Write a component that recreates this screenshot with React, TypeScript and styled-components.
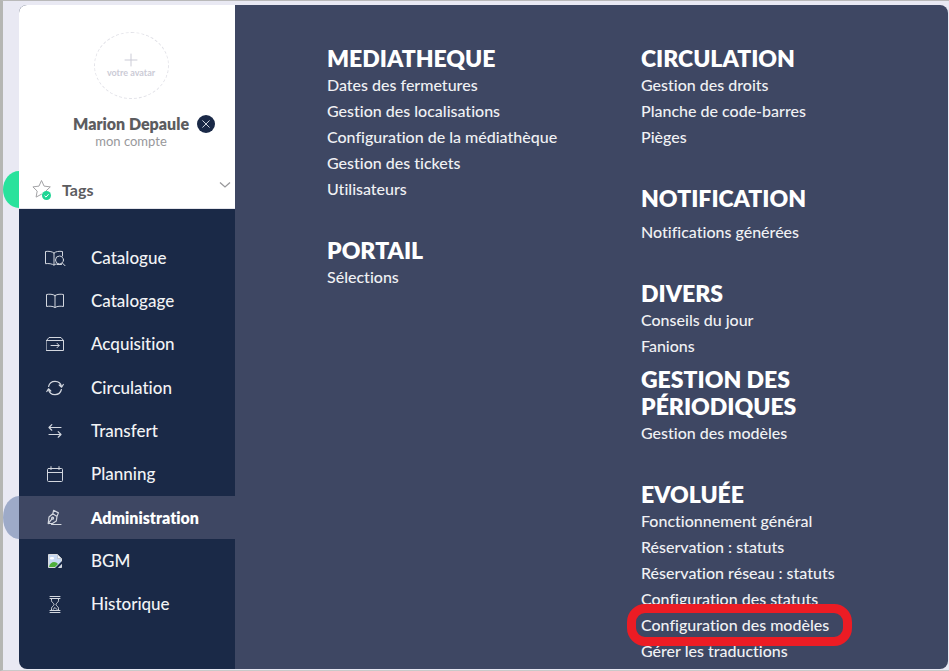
import React from "react";
import styled, { createGlobalStyle, css } from "styled-components";

const GlobalStyle = createGlobalStyle`
  *, *::before, *::after { box-sizing: border-box; }
  body {
    margin: 0;
    background: #e9e9f3;
    font-family: "Lato", "Open Sans", sans-serif;
    font-variant-ligatures: none;
  }
  ul { list-style: none; margin: 0; padding: 0; }
  h2 { margin: 0; }
`;

const Page = styled.div`
  min-height: 100vh;
  display: flex;
  padding: 4px 1px 1px 16px;
  border-top: 1px solid #b9b9b9;
  border-bottom: 1px solid #c9c9c9;
  border-left: 3px solid #b5b6b3;
`;

const Shell = styled.div`
  flex: 1;
  display: flex;
`;

const Sidebar = styled.aside`
  flex: 0 0 216px;
  display: flex;
  flex-direction: column;
  background: #1a2947;
  border-radius: 8px 0 0 8px;
`;

const Profile = styled.section`
  display: flex;
  flex-direction: column;
  align-items: center;
  padding: 27px 0 23px 8px;
  background: #fff;
  border-radius: 8px 0 0 0;
`;

const AvatarButton = styled.button`
  width: 75px;
  height: 67px;
  display: flex;
  flex-direction: column;
  align-items: center;
  justify-content: center;
  padding: 0;
  border: 1px dashed #e2e2e8;
  border-radius: 50%;
  background: none;
  color: #cbcbd6;
  font: 700 9px/12px "Lato", sans-serif;
`;

const NameRow = styled.div`
  align-self: stretch;
  display: grid;
  grid-template-columns: 1fr auto 1fr;
  align-items: center;
  column-gap: 8px;
  margin-top: 15px;
`;

const UserName = styled.strong`
  grid-column: 2;
  color: #5c5c5f;
  font-size: 16px;
  line-height: 20px;
  font-weight: 800;
`;

const LogoutButton = styled.button`
  width: 18px;
  height: 18px;
  padding: 0;
  display: grid;
  place-items: center;
  border: 0;
  border-radius: 50%;
  background: #1a2947;
  color: #cfd4de;
`;

const AccountLink = styled.a`
  color: #98989b;
  font-size: 13px;
  line-height: 14px;
  text-decoration: none;
`;

const tab = css<{ $color: string }>`
  &::before {
    content: "";
    position: absolute;
    top: 0;
    bottom: 0;
    left: -16px;
    width: 16px;
    border-radius: 16px 0 0 16px / 50% 0 0 50%;
    background: ${(p) => p.$color};
  }
`;

const TagsButton = styled.button<{ $color: string }>`
  position: relative;
  display: grid;
  grid-template-columns: 43px 1fr auto;
  align-items: center;
  height: 38px;
  padding: 0 4px 0 0;
  border: 0;
  border-bottom: 1px solid #e4e4ea;
  background: #fff;
  color: #5c5c5f;
  font: 700 16px/20px "Lato", sans-serif;
  text-align: left;
  ${tab}
`;

const TagsIcon = styled.span`
  display: grid;
  justify-content: end;
  padding-right: 10px;
`;

const Chevron = styled.svg`
  margin-bottom: 10px;
`;

const Nav = styled.nav`
  flex: 1;
  display: flex;
  padding: 27px 0 43px;
`;

const NavList = styled.ul`
  flex: 1;
  display: grid;
  grid-auto-rows: 1fr;
`;

const NavItem = styled.li`
  display: grid;
`;

const NavLink = styled.a<{ $active: boolean; $color: string }>`
  position: relative;
  display: grid;
  grid-template-columns: 72px 1fr;
  align-items: center;
  min-height: 40px;
  color: #f2f3f5;
  font-size: ${(p) => (p.$active ? 16 : 17)}px;
  line-height: 20px;
  font-weight: 500;
  text-decoration: none;
  ${(p) =>
    p.$active &&
    css`
      background: #3e4763;
      color: #fff;
      font-weight: 800;
    `}
  ${(p) => p.$active && tab}
`;

const IconCell = styled.span`
  display: grid;
  place-items: center;
  color: #d3d7df;
`;

const MegaMenu = styled.main`
  flex: 1;
  display: grid;
  grid-template-columns: 1fr 1fr;
  column-gap: 56px;
  align-content: start;
  padding: 40px 49px 4px 92px;
  background: #3e4763;
  border-radius: 0 8px 8px 0;
`;

const Group = styled.section<{ $tight?: boolean }>`
  margin-top: ${(p) => (p.$tight ? 7 : 35)}px;

  &:first-child {
    margin-top: 0;
  }
`;

const GroupTitle = styled.h2<{ $loose?: boolean }>`
  margin-bottom: ${(p) => (p.$loose ? 7 : 0)}px;
  color: #fff;
  font-size: 23px;
  line-height: 27px;
  font-weight: 800;
`;

const MenuItem = styled.li`
  height: 26px;
`;

const MenuLink = styled.a<{ $marked: boolean }>`
  position: relative;
  display: inline-block;
  color: #f0f1f4;
  font-size: 16px;
  line-height: 26px;
  font-weight: 500;
  text-decoration: none;
  white-space: nowrap;
  ${(p) =>
    p.$marked &&
    css`
      z-index: 1;
      &::after {
        content: "";
        position: absolute;
        inset: -8px -23px -8px -14px;
        border: 9px solid #ec1c24;
        border-radius: 18px;
      }
    `}
`;

const Line = styled.svg`
  display: block;
  fill: none;
  stroke: currentColor;
  stroke-linecap: round;
  stroke-linejoin: round;
`;

const icons: Record<string, React.ReactNode> = {
  catalogue: (
    <Line width="22" height="18" viewBox="0 0 22 18">
      <path d="M10 4.500v11M10 4C8 2.400 4.500 2 1.500 2.500v12.200c3-.4 6.400 0 8.500 1.300M10 4c1.800-1.600 5-2 8.500-1.500V7M10 16c.6-.5 1.300-.8 2-1" />
      <circle cx="15.500" cy="11" r="4" />
      <path d="M18.300 14l2.700 2.700M13 15.500h4.500" />
    </Line>
  ),
  catalogage: (
    <Line width="18" height="16" viewBox="0 0 18 16">
      <path d="M9 2.500v12M9 2.500C6.500 1 3.500 1 .5 1.500v12C3.500 13 6.500 13 9 14.500c2.500-1.500 5.500-1.500 8.500-1v-12C14.500 1 11.500 1 9 2.500z" />
    </Line>
  ),
  acquisition: (
    <Line width="18" height="16" viewBox="0 0 18 16">
      <path d="M.5 4.500h17v10H.5zM.5 4.500l2.500-3h12l2.500 3M5 9.500h8M11 7.300l2.200 2.200-2.200 2.200" />
    </Line>
  ),
  circulation: (
    <Line width="18" height="16" viewBox="0 0 18 16" strokeWidth="1.200">
      <path d="M2.600 6.500A6.600 6.600 0 0 1 15.500 6.700M15.400 9.500A6.600 6.600 0 0 1 2.500 9.300M13.200 5l2.400 2.200L17.300 4.500M.8 11.500l1.700-2.700L4.800 11" />
    </Line>
  ),
  transfert: (
    <Line width="16" height="16" viewBox="0 0 16 16" strokeWidth="1.200">
      <path d="M14 4.500H2M4.800 1.700L2 4.500l2.800 2.700M2 11.500h12M11.200 8.700l2.800 2.800-2.800 2.700" />
    </Line>
  ),
  planning: (
    <Line width="16" height="16" viewBox="0 0 16 16">
      <path d="M1.500 2.500h13a1 1 0 0 1 1 1v11a1 1 0 0 1-1 1h-13a1 1 0 0 1-1-1v-11a1 1 0 0 1 1-1zM.5 6.500h15M4 .6v3M12 .6v3" />
    </Line>
  ),
  administration: (
    <Line width="16" height="17" viewBox="0 0 16 17" strokeWidth="1.200">
      <path d="M1.200 14.500L2 8l3.800-3.200 4.200 2.600-.7 4.600-3.800 2.500zM1.200 14.500L5 9.800M5.800 4.800L6.600 1.300l4.800 2.600-1.400 3.500M4.500 15.500h9.500" />
      <circle cx="5.600" cy="9.200" r="1" />
    </Line>
  ),
  bgm: (
    <svg width="14" height="14" viewBox="0 0 14 14" aria-hidden="true">
      <path d="M.5.500h9l4 4v9H.5z" fill="#c7d8f2" stroke="#d9dadd" />
      <path d="M9.500.500v4h4z" fill="#f4f5f7" stroke="#aeb2b8" strokeWidth=".6" />
      <ellipse cx="4" cy="4.300" rx="2.200" ry="1.300" fill="#fff" />
      <path d="M1 13c.5-3.500 3-5 5-5 1.800 0 3 .8 4 2l-3 3z" fill="#4fae3b" />
      <path d="M7 14l7-7v2.800L9.800 14z" fill="#1a2947" />
    </svg>
  ),
  historique: (
    <Line width="12" height="17" viewBox="0 0 12 17">
      <path d="M1 .5h10M1 2.500h10M1 14.500h10M1 16.500h10M2.500 2.500v2.200c0 1.800 2.500 2.300 2.500 3.800s-2.500 2-2.500 3.800v2.200M9.500 2.500v2.200c0 1.800-2.500 2.300-2.500 3.800s2.500 2 2.500 3.800v2.200M4 13.500L6 11.500l2 2" />
    </Line>
  ),
};

const navItems = [
  { label: "Catalogue", icon: "catalogue" },
  { label: "Catalogage", icon: "catalogage" },
  { label: "Acquisition", icon: "acquisition" },
  { label: "Circulation", icon: "circulation" },
  { label: "Transfert", icon: "transfert" },
  { label: "Planning", icon: "planning" },
  { label: "Administration", icon: "administration", active: true },
  { label: "BGM", icon: "bgm" },
  { label: "Historique", icon: "historique" },
];

interface MenuGroup {
  title: string;
  items: string[];
  tight?: boolean;
  loose?: boolean;
}

const columns: MenuGroup[][] = [
  [
    {
      title: "MEDIATHEQUE",
      items: [
        "Dates des fermetures",
        "Gestion des localisations",
        "Configuration de la médiathèque",
        "Gestion des tickets",
        "Utilisateurs",
      ],
    },
    { title: "PORTAIL", items: ["Sélections"] },
  ],
  [
    { title: "CIRCULATION", items: ["Gestion des droits", "Planche de code-barres", "Pièges"] },
    { title: "NOTIFICATION", items: ["Notifications générées"], loose: true },
    { title: "DIVERS", items: ["Conseils du jour", "Fanions"] },
    { title: "GESTION DES PÉRIODIQUES", items: ["Gestion des modèles"], tight: true },
    {
      title: "EVOLUÉE",
      items: [
        "Fonctionnement général",
        "Réservation : statuts",
        "Réservation réseau : statuts",
        "Configuration des statuts",
        "Configuration des modèles",
        "Gérer les traductions",
      ],
    },
  ],
];

const markedItem = "Configuration des modèles";

export default function App() {
  return (
    <>
      <GlobalStyle />
      <Page>
        <Shell>
          <Sidebar>
            <Profile>
              <AvatarButton type="button">
                <Line width="14" height="14" viewBox="0 0 14 14">
                  <path d="M7 1v12M1 7h12" />
                </Line>
                votre avatar
              </AvatarButton>
              <NameRow>
                <UserName>Marion Depaule</UserName>
                <LogoutButton type="button" aria-label="Déconnexion">
                  <Line width="8" height="8" viewBox="0 0 8 8">
                    <path d="M.7.700l6.600 6.600M7.300.700L.7 7.300" />
                  </Line>
                </LogoutButton>
              </NameRow>
              <AccountLink href="#compte">mon compte</AccountLink>
            </Profile>
            <TagsButton type="button" $color="#29e29c">
              <TagsIcon>
                <svg width="20" height="22" viewBox="0 0 20 22" aria-hidden="true">
                  <path
                    d="M9.500 1.500l2.600 5.600 6.200.8-4.500 4.200 1.100 6-5.400-2.900-5.400 2.900 1.100-6L.9 7.900l6.100-.8z"
                    fill="none"
                    stroke="#a3a3a6"
                    strokeLinejoin="round"
                  />
                  <circle cx="14.500" cy="16.500" r="4.500" fill="#1fd595" />
                  <path d="M12.500 16.700l1.500 1.400 2.600-2.900" fill="none" stroke="#fff" />
                </svg>
              </TagsIcon>
              Tags
              <Chevron width="12" height="8" viewBox="0 0 12 8" aria-hidden="true">
                <path d="M1 1.500l5 4.500 5-4.500" fill="none" stroke="#98989b" strokeWidth="1.300" />
              </Chevron>
            </TagsButton>
            <Nav>
              <NavList>
                {navItems.map((item) => (
                  <NavItem key={item.label}>
                    <NavLink
                      href={`#${item.icon}`}
                      $active={!!item.active}
                      $color="#9daac8"
                      aria-current={item.active ? "page" : undefined}
                    >
                      <IconCell>{icons[item.icon]}</IconCell>
                      {item.label}
                    </NavLink>
                  </NavItem>
                ))}
              </NavList>
            </Nav>
          </Sidebar>
          <MegaMenu>
            {columns.map((groups, index) => (
              <div key={index}>
                {groups.map((group) => (
                  <Group key={group.title} $tight={group.tight}>
                    <GroupTitle $loose={group.loose}>{group.title}</GroupTitle>
                    <ul>
                      {group.items.map((item) => (
                        <MenuItem key={item}>
                          <MenuLink href="#menu" $marked={item === markedItem}>
                            {item}
                          </MenuLink>
                        </MenuItem>
                      ))}
                    </ul>
                  </Group>
                ))}
              </div>
            ))}
          </MegaMenu>
        </Shell>
      </Page>
    </>
  );
}
